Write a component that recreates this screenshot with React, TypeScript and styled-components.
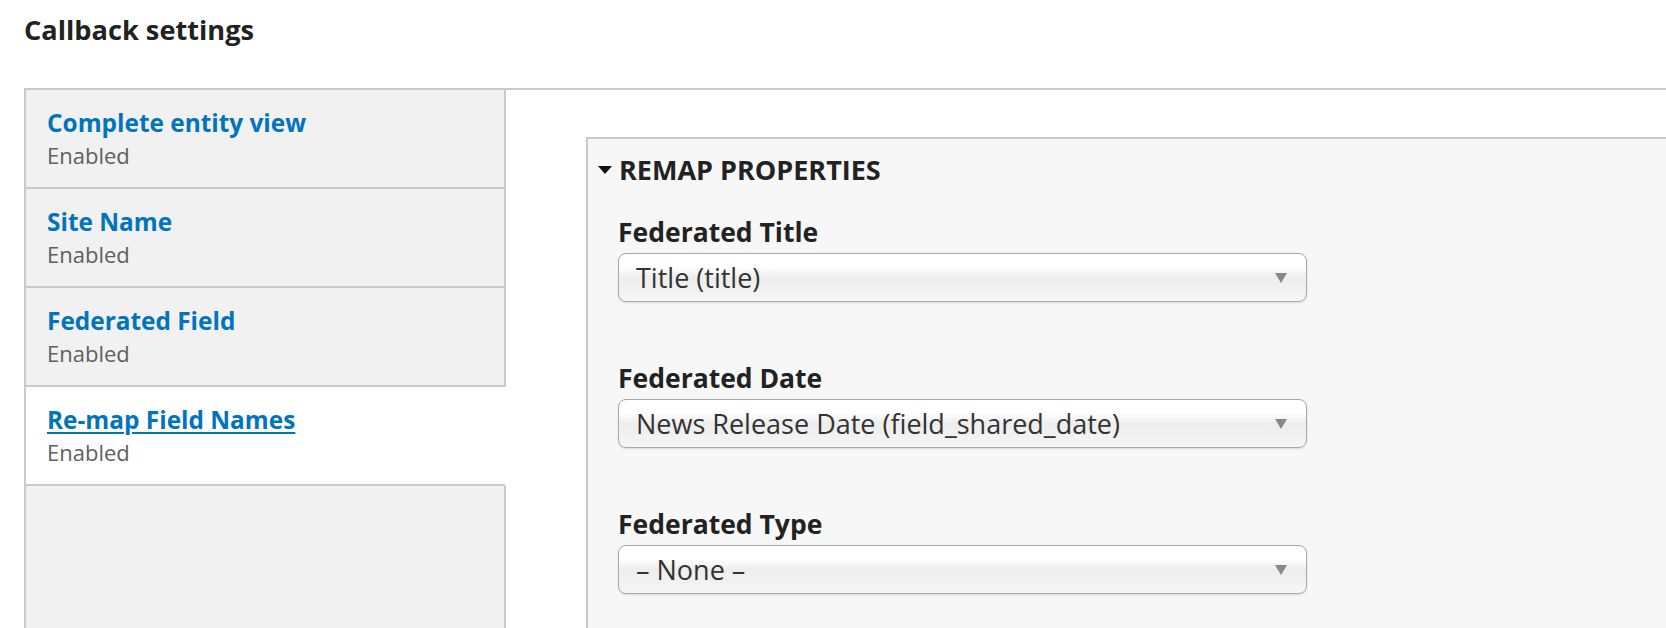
import React from "react";
import styled, { createGlobalStyle } from "styled-components";

const GlobalStyle = createGlobalStyle`
  html, body {
    margin: 0;
    padding: 0;
    height: 628px;
    overflow: hidden;
    background: #fff;
    font-family: "Open Sans", "Liberation Sans", sans-serif;
  }
`;

const Page = styled.div`
  padding: 13px 0 0 24px;
`;

const Heading = styled.h2`
  margin: 0 0 41px;
  font-size: 27.2px;
  line-height: 34px;
  font-weight: 700;
  color: #222;
`;

const VerticalTabs = styled.div`
  display: flex;
  height: 600px;
  border-top: 2px solid #cacaca;
  border-left: 2px solid #cacaca;
`;

const TabList = styled.div`
  width: 480px;
  flex-shrink: 0;
  display: flex;
  flex-direction: column;
`;

const Tab = styled.div<{ $active?: boolean }>`
  padding: 18px 0 16px 21px;
  background: ${(p) => (p.$active ? "#fff" : "#f1f1f1")};
  border-bottom: 2px solid #cacaca;
  border-right: 2px solid ${(p) => (p.$active ? "#fff" : "#cacaca")};
`;

const TabTitle = styled.a<{ $active?: boolean }>`
  display: block;
  margin-bottom: 1px;
  font-size: 24.4px;
  line-height: 30px;
  font-weight: 700;
  color: #0074bd;
  text-decoration: ${(p) => (p.$active ? "underline" : "none")};
  text-decoration-thickness: 2px;
  text-underline-offset: 3px;
  cursor: pointer;
`;

const TabSummary = styled.div`
  font-size: 22px;
  line-height: 32px;
  color: #5f5f5f;
`;

const TabFiller = styled.div`
  flex: 1;
  background: #f1f1f1;
  border-right: 2px solid #cacaca;
`;

const Pane = styled.div`
  flex: 1;
  min-width: 0;
  padding: 47px 0 0 80px;
  overflow: hidden;
`;

const Fieldset = styled.div`
  width: 1200px;
  height: 600px;
  padding: 15px 0 0 10px;
  background: #f7f7f7;
  border: 2px solid #cacaca;
  border-right: none;
`;

const Legend = styled.div`
  display: flex;
  align-items: center;
  gap: 7px;
  font-size: 27px;
  line-height: 32px;
  font-weight: 700;
  color: #222;
  text-transform: uppercase;
  margin-bottom: 30px;
`;

const Fields = styled.div`
  padding-left: 20px;
`;

const Field = styled.div`
  margin-bottom: 60px;
`;

const Label = styled.label`
  display: block;
  font-size: 26.5px;
  line-height: 32px;
  font-weight: 700;
  color: #222;
  margin-bottom: 5px;
`;

const SelectBox = styled.div`
  box-sizing: border-box;
  width: 689px;
  height: 49px;
  display: flex;
  align-items: center;
  justify-content: space-between;
  padding: 0 19px 0 17px;
  border: 1.5px solid #a8a8a8;
  border-radius: 8px;
  background: linear-gradient(
    to bottom,
    #ffffff 0%,
    #ffffff 28%,
    #ededed 50%,
    #f1f1f1 75%,
    #f6f6f6 100%
  );
  box-shadow: 0 1px 2px rgba(0, 0, 0, 0.12);
  font-size: 27px;
  line-height: 32px;
  color: #333;
`;

const Arrow = () => (
  <svg width="12" height="10" viewBox="0 0 12 10">
    <polygon points="0,0 12,0 6,10" fill="#888" />
  </svg>
);

const Caret = () => (
  <svg width="14" height="8" viewBox="0 0 14 8">
    <polygon points="0,0 14,0 7,8" fill="#111" />
  </svg>
);

const tabs = [
  { title: "Complete entity view", summary: "Enabled" },
  { title: "Site Name", summary: "Enabled" },
  { title: "Federated Field", summary: "Enabled" },
  { title: "Re-map Field Names", summary: "Enabled", active: true },
];

const fields = [
  { label: "Federated Title", value: "Title (title)" },
  { label: "Federated Date", value: "News Release Date (field_shared_date)" },
  { label: "Federated Type", value: "– None –" },
];

export default function App() {
  return (
    <Page>
      <GlobalStyle />
      <Heading>Callback settings</Heading>
      <VerticalTabs>
        <TabList>
          {tabs.map((t) => (
            <Tab key={t.title} $active={t.active}>
              <TabTitle $active={t.active}>{t.title}</TabTitle>
              <TabSummary>{t.summary}</TabSummary>
            </Tab>
          ))}
          <TabFiller />
        </TabList>
        <Pane>
          <Fieldset>
            <Legend>
              <Caret />
              Remap properties
            </Legend>
            <Fields>
              {fields.map((f) => (
                <Field key={f.label}>
                  <Label>{f.label}</Label>
                  <SelectBox>
                    <span>{f.value}</span>
                    <Arrow />
                  </SelectBox>
                </Field>
              ))}
            </Fields>
          </Fieldset>
        </Pane>
      </VerticalTabs>
    </Page>
  );
}
